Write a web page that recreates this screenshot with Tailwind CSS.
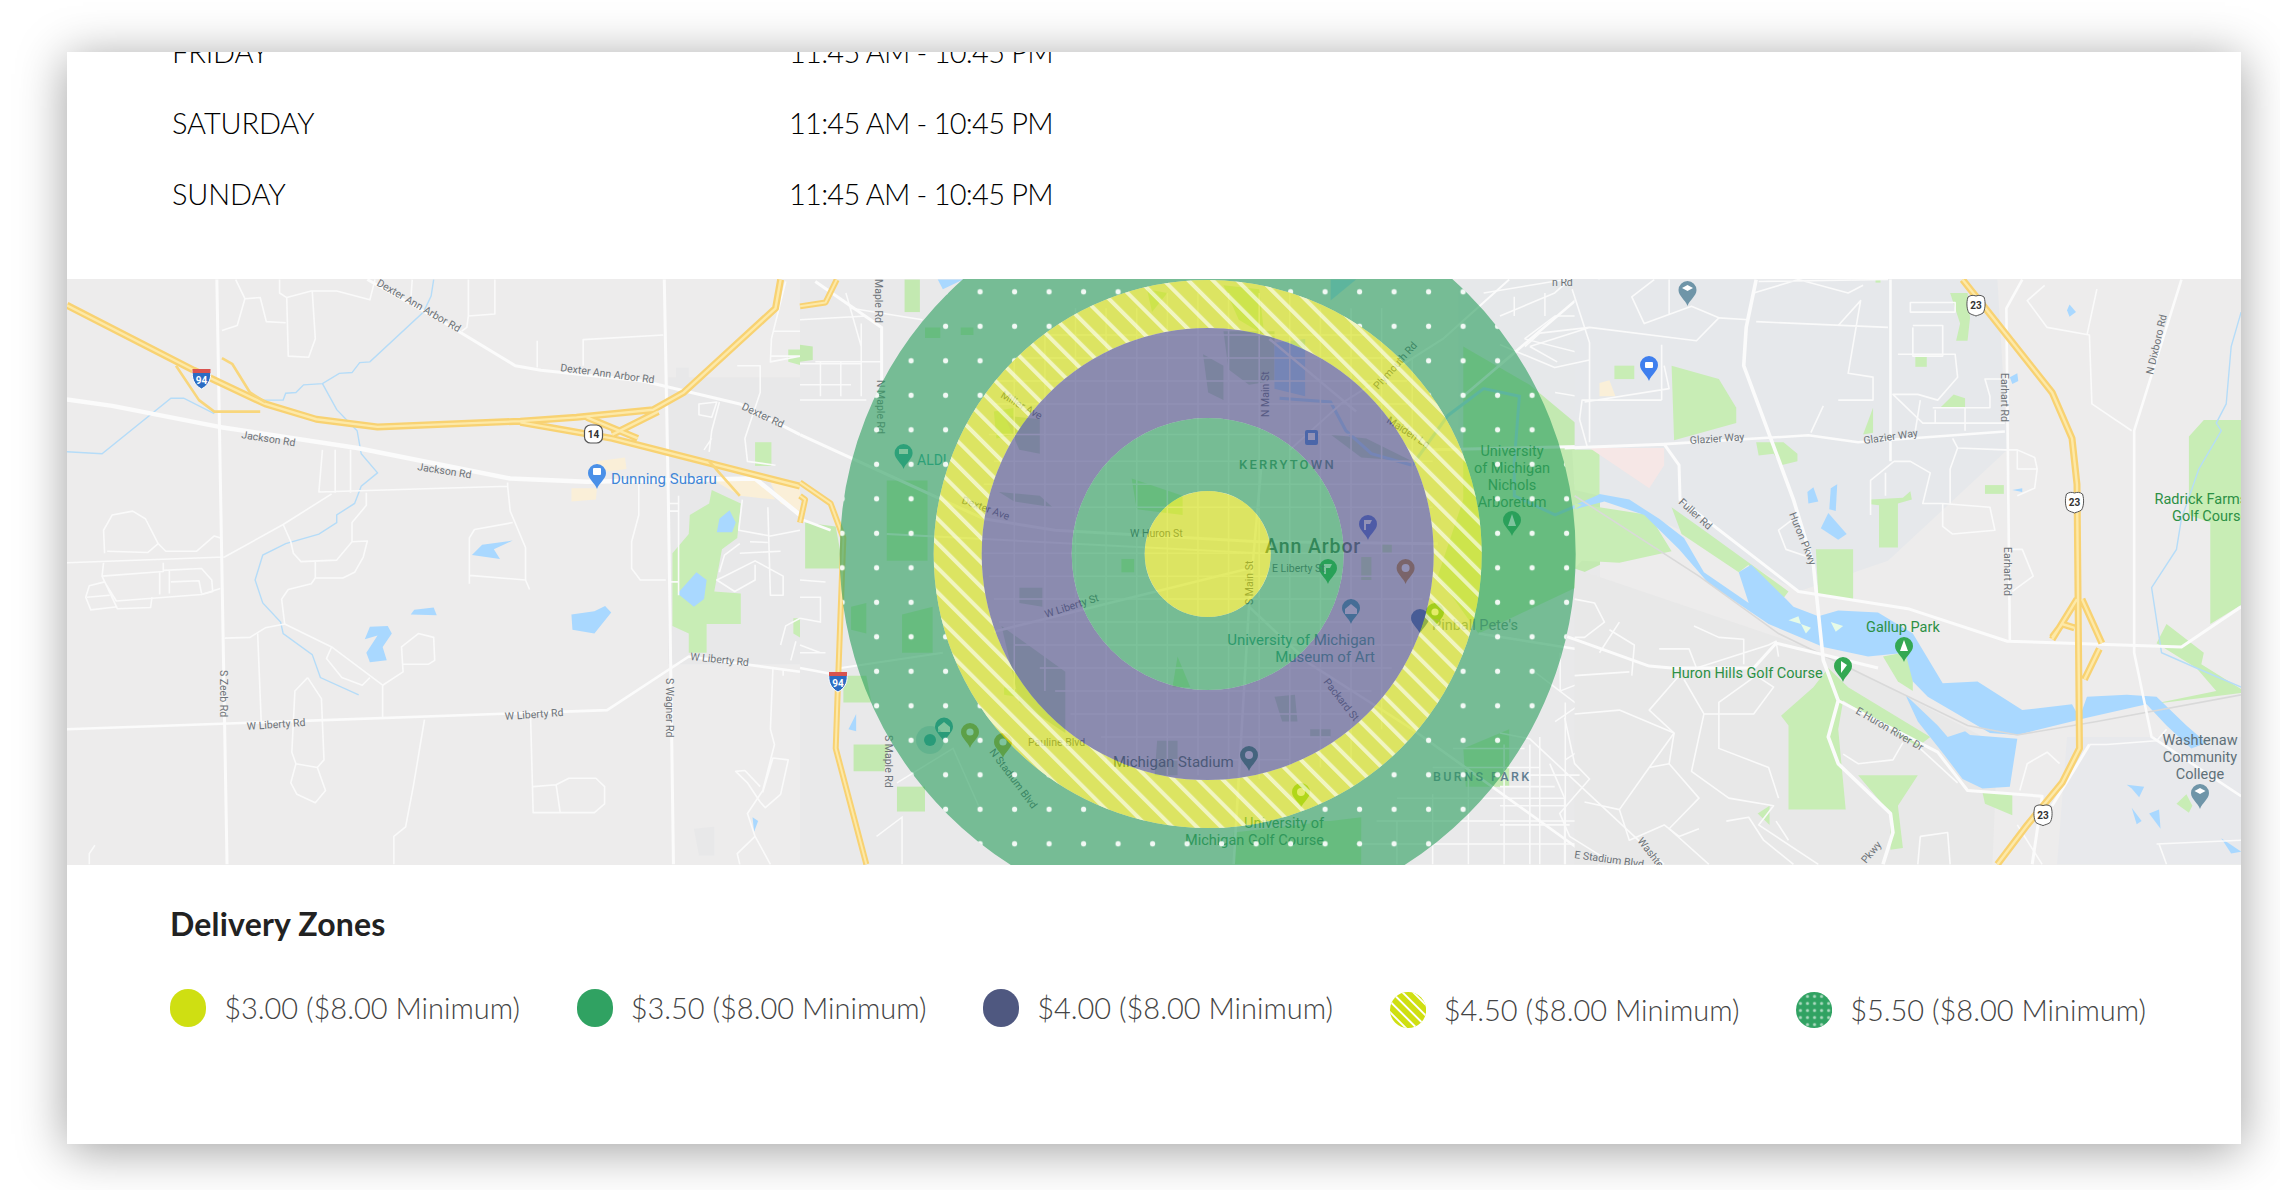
<!DOCTYPE html>
<html lang="en">
<head>
  <meta charset="UTF-8">
  <title>Delivery Zones</title>
  <script src="https://cdn.jsdelivr.net/npm/@tailwindcss/browser@4"></script>
</head>
<body class="bg-white h-[1190px] overflow-hidden font-[Lato,sans-serif]">
  <div class="ml-[67px] mt-[52px] w-[2174px] h-[1092px] bg-white shadow-[0_6px_46px_rgba(0,0,0,0.38)] absolute overflow-hidden">

    <!-- hours, scrolled so friday is cut off -->
    <div class="h-[227px] overflow-hidden text-black text-[29px] font-light pl-[105px]">
      <div class="-mt-[36px]">
        <div class="flex h-[71px] items-center"><span class="w-[617px] tracking-[-0.15px]">FRIDAY</span><span class="tracking-[-0.75px]">11:45 AM - 10:45 PM</span></div>
        <div class="flex h-[71px] items-center"><span class="w-[617px] tracking-[-0.15px]">SATURDAY</span><span class="tracking-[-0.75px]">11:45 AM - 10:45 PM</span></div>
        <div class="flex h-[71px] items-center"><span class="w-[617px] tracking-[-0.15px]">SUNDAY</span><span class="tracking-[-0.75px]">11:45 AM - 10:45 PM</span></div>
      </div>
    </div>

    <!-- map -->
    <svg class="block [&_path]:[vector-effect:non-scaling-stroke]" width="2174" height="586" viewBox="67 279 2174 586" font-family="Roboto, sans-serif">
      <defs>
        <path id="pin" d="M0 0C-2-6-9-10-9-16A9 9 0 1 1 9-16C9-10 2-6 0 0Z"/>
        <path id="shieldI" d="M-9-8H9C10-2 8 6 0 10C-8 6-10-2-9-8Z"/>
        <path id="shieldU" d="M-8-8C-5-10-3-10 0-9C3-10 5-10 8-8C10-2 9 5 7 8C4 10 2 10 0 11C-2 10-4 10-7 8C-9 5-10-2-8-8Z"/>
        <path id="hw1" d="M131 92L380 262L520 350L620 390L740 410L1020 395L1130 385L1280 365L1340 320L1520 100L1530 25M1020 398L1200 440L1568 565M1150 385L1250 440M1200 430L1290 370"/>
        <path id="hw2" d="M345 250L390 340L420 370L510 370M435 230L455 245L490 320L520 345M1390 500L1450 590"/>
        <path id="hw3" d="M72 25L50 85L0 95M0 555L60 610L85 700L75 1060L70 1250L130 1553M0 590L10 600L0 660"/>
        <path id="hw4" d="M930 25L985 115L1110 320L1150 440L1160 560L1165 1250L1130 1340L1060 1450L1000 1553M1160 860L1110 965M1170 860L1210 975M1205 990L1175 1070M1110 960L1130 925L1155 935"/>
        <pattern id="dots" x="962.85" y="274.55" width="34.5" height="34.5" patternUnits="userSpaceOnUse">
          <rect width="34.5" height="34.5" fill="#2fa060" fill-opacity=".62"/>
          <circle cx="17.25" cy="17.25" r="2.6" fill="#fff" fill-opacity=".9"/>
        </pattern>
        <pattern id="hatch" width="17.3" height="17.3" patternUnits="userSpaceOnUse" patternTransform="rotate(-45)">
          <rect width="17.3" height="17.3" fill="#d4e00e" fill-opacity=".62"/>
          <rect width="4" height="17.3" fill="#fff" fill-opacity=".6"/>
        </pattern>
      </defs>

      <rect x="67" y="279" width="2174" height="586" fill="#edecec"/>

      <!-- west side -->
      <g transform="translate(0 270) scale(.5102 .3827)">
        <g fill="#e8e8e9">
          <path d="M1310 280H1568V1030H1310Z"/>
          <path d="M1325 255H1350V300H1325Z"/>
          <path d="M1360 1460L1400 1455L1400 1530L1370 1530Z"/>
        </g>
        <g fill="#faefd8">
          <path d="M1170 500L1225 490L1228 520L1170 530Z"/>
          <path d="M1120 570H1170L1168 600L1120 605Z"/>
          <path d="M1400 550H1490L1520 600L1450 590Z"/>
          <path d="M1510 555H1568V630L1530 610Z"/>
        </g>
        <g fill="#c8edb5">
          <path d="M1318 740L1350 690L1352 640L1390 610L1395 575L1452 610L1445 700L1415 730L1400 840L1452 845V925L1385 925L1385 1000L1350 1000V950L1318 930Z"/>
          <path d="M1480 450H1512V512H1480Z"/>
          <path d="M1545 208H1568V248L1545 240Z"/>
          <path d="M1555 910H1568V960L1555 950Z"/>
        </g>
        <g fill="#a9d8ff">
          <path d="M1328 845L1365 790L1385 810L1380 860L1360 880Z"/>
          <path d="M1405 685L1410 650L1430 628L1442 660L1435 685Z"/>
          <path d="M925 745L945 718L1005 707L968 730L980 755Z"/>
          <path d="M805 900L812 888L850 882L856 902Z"/>
          <path d="M715 965L725 932L760 930L768 950L750 985L758 1020L725 1025L718 1000L740 955Z"/>
          <path d="M1120 900L1165 892L1186 878L1198 895L1165 950L1122 940Z"/>
          <path d="M1475 1430L1486 1440L1478 1468Z"/>
        </g>
        <g fill="none" stroke="#b5dcf8" stroke-width="1.4">
          <path d="M850 25L845 68L830 110L725 240L705 242L690 268L665 270L632 297L595 300L580 320L560 322L555 340L515 340"/>
          <path d="M632 297L660 365L700 420L708 480L740 530L708 565L695 610L660 640L660 660L625 690L560 715L515 745L500 810L515 870L550 920L555 950L612 1005L628 1065L703 1110"/>
          <path d="M131 475L200 480L335 335L360 335L420 375"/>
        </g>
        <g fill="none" stroke="#fafafa" stroke-width="1.6" stroke-linejoin="round">
          <path d="M548 25V60L562 72L610 55L660 55L725 78L735 25"/>
          <path d="M462 25L480 75L465 145L435 158M480 75L510 72L522 135L560 138"/>
          <path d="M562 72L565 225L605 228L618 180L612 55"/>
          <path d="M808 25L805 80M918 25V120L970 115V25M918 120L915 150L905 160M1053 185V255M1143 250V182L1300 170"/>
          <path d="M632 470L625 580L995 565L1000 630L1030 725L1030 810M657 470V582M687 470V582M995 555V565"/>
          <path d="M1005 660L930 678L920 700L920 820M920 798L1030 810L1038 835"/>
          <path d="M650 585L555 665L440 750L131 765"/>
          <path d="M555 665L570 710L575 740L590 762L660 758L690 710L720 708L712 750L695 790L672 805L618 805L618 762"/>
          <path d="M718 582V615L690 660L690 710"/>
          <path d="M618 805L610 820L565 835L552 860L558 925L520 935L490 960L440 962"/>
          <path d="M505 950L512 1180M558 925L650 985L750 1085L750 1170"/>
          <path d="M650 985L640 1015L670 1065L710 1085L725 1065"/>
          <path d="M750 1085L790 1050L787 985L820 950L850 960L852 1020L840 1030L790 1030"/>
          <path d="M832 1175L810 1350L795 1455L772 1480V1553"/>
          <path d="M603 1065L578 1100L572 1260L580 1290L622 1300L635 1280L630 1120L603 1065"/>
          <path d="M580 1290L570 1340L582 1370L618 1392L638 1360L622 1300"/>
          <path d="M1040 1170L1045 1418H1165L1185 1395V1350L1168 1328H1115L1090 1345L1098 1418M1045 1350L1090 1345"/>
          <path d="M186 1503L175 1525V1553"/>
          <path d="M205 740L203 680L220 640L260 630L285 650L310 715L290 738L210 735M310 715L325 735L385 735L420 695L432 700"/>
          <path d="M203 765L200 800L230 885L295 882L298 855M200 800L320 788V765M320 785L395 780L415 810L417 840L395 848L228 865L205 815L175 825L168 855L178 888L230 880"/>
          <path d="M313 790V848M332 785V845M335 815L390 812L395 845M170 855L215 850M395 848L432 832"/>
          <path d="M1252 560V640L1238 710V780L1255 810H1305"/>
          <path d="M1370 350L1405 345L1395 385L1370 378ZM1410 345L1395 420L1390 475M1380 470L1395 440"/>
          <path d="M1445 250H1490V320L1460 440L1465 500L1520 510M1540 30L1512 180L1510 240L1568 225M1515 160H1568M1512 225H1568"/>
          <path d="M1330 590V850M1310 610H1330M1310 630H1330M1310 815H1330"/>
          <path d="M1455 600L1448 680L1510 695L1568 680M1505 620L1510 850H1535V800L1480 760L1420 800L1405 810L1440 840L1480 810V770M1450 740L1530 735M1470 710L1505 712M1410 790L1420 745L1450 715"/>
          <path d="M1515 1040L1510 1200L1518 1240L1495 1360L1465 1420L1480 1480L1445 1525L1450 1553M1495 1365L1515 1275L1545 1280L1530 1370L1500 1405L1490 1390L1465 1340L1442 1310L1460 1308L1490 1350M1480 1480L1510 1553"/>
          <path d="M1535 1045V1060M1530 980L1540 930L1568 910M1550 1020L1560 970"/>
        </g>
        <g fill="none" stroke="#fbfbfb" stroke-linejoin="round">
          <path stroke-width="4.5" d="M131 338L220 355L430 410L700 465L1000 545L1150 553L1480 545L1568 640"/>
          <path stroke-width="3" d="M720 25L880 145L1010 250L1060 262L1260 290L1450 350L1568 430"/>
          <path stroke-width="3" d="M425 25L430 400L445 1553M1302 25L1310 600L1320 1553"/>
          <path stroke-width="2.6" d="M131 1200L1190 1150L1350 1010L1568 1050"/>
        </g>
        <g fill="none" stroke="#f8d272" stroke-width="7" stroke-linejoin="round"><use href="#hw1"/></g>
        <g fill="none" stroke="#fde9a8" stroke-width="2.4" stroke-linejoin="round"><use href="#hw1"/></g>
        <g fill="none" stroke="#f8d67c" stroke-width="2.6" stroke-linejoin="round"><use href="#hw2"/></g>
      </g>

      <!-- middle, most of it sits under the zones -->
      <g transform="translate(800 270) scale(.5102 .3827)">
        <path d="M0 25H1568V1553H0Z" fill="#e9e9ea"/>
        <path d="M1290 25H1568V470H1290Z" fill="#e6e8ea"/>
        <g fill="#c3e9b1">
          <path d="M1300 200L1430 300L1520 400V830L1330 950L1250 800L1300 600Z"/>
          <path d="M1490 480L1568 470V770L1520 800Z"/>
          <path d="M170 550H250V760H170Z"/>
          <path d="M10 660L70 670L85 780H10Z"/>
          <path d="M650 545L750 590V640L660 625Z"/>
          <path d="M830 40L900 50L910 170L860 130Z"/>
          <path d="M850 1470L1100 1430V1553H850Z"/>
          <path d="M105 1240H175L165 1310L105 1310Z"/>
          <path d="M190 1350H245V1415H190Z"/>
          <path d="M85 1060L130 1060L140 1130H85Z"/>
          <path d="M1300 1250L1390 1200V1350H1305Z"/>
          <path d="M0 195L25 200V235L0 240Z"/>
          <path d="M205 25H235V110H205Z"/>
          <path d="M630 755H655V790H630Z"/>
          <path d="M740 1010L765 1090H730Z"/>
          <path d="M1100 750H1120V810H1100Z"/>
          <path d="M1140 710H1160V740H1140Z"/>
          <path d="M245 150H275V178H245ZM315 150H340V170H315Z"/>
          <path d="M100 880L130 870L130 950L100 940Z"/>
          <path d="M200 900L260 880V1000H200Z"/>
          <path d="M400 1090L450 1100V1120L400 1110Z"/>
          <path d="M380 370L420 360V430L385 440Z"/>
          <path d="M680 50L720 60L690 110Z"/>
          <path d="M1000 1440H1040V1553H1000Z"/>
        </g>
        <g fill="#bcd6bb">
          <path d="M830 160H930V290L880 300L840 260Z"/>
          <path d="M395 930L520 1050V1210L430 1130Z"/>
          <path d="M790 220L830 250V340L800 320Z"/>
          <path d="M430 830H475V880L430 870Z"/>
          <path d="M700 1230H740V1320H695Z"/>
          <path d="M930 1115L970 1110L975 1180L945 1180Z"/>
          <path d="M1000 1200H1040V1220H1000Z"/>
          <path d="M400 380L470 390V480L430 470Z"/>
          <path d="M390 580L470 590L495 620L420 605Z"/>
          <path d="M1040 430L1110 440L1200 500L1100 490Z"/>
        </g>
        <g fill="#a9d8ff">
          <path d="M930 190L990 180V330L930 310Z"/>
          <path d="M1040 25H1090L1040 80Z"/>
          <path d="M270 25H320L280 50Z"/>
          <path d="M95 1200L110 1160V1205Z"/>
        </g>
        <path d="M940 335L1040 345L1070 420L1120 480L1200 510L1270 380L1340 310L1410 330L1400 500L1400 590L1480 640L1568 590" fill="none" stroke="#a9d8ff" stroke-width="3"/>
        <g fill="none" stroke="#fafafa" stroke-width="1.5">
          <path d="M380 500H1240M360 560H1220M350 620H1240M360 740H1240M370 800H1240M380 860H1220M390 920H1210M420 980H1200M470 1040H1160M500 1100H1120M530 1160H1080M590 1220H1040M640 1280H960"/>
          <path d="M420 230H1180M480 170H1110M380 290H1190M380 350H1190M370 430H1220"/>
          <path d="M420 230V1100M480 170V1100M540 100V1220M600 100V1290M660 100V1300M720 60V1320M780 60V1320M840 60V1330M900 60V1330M960 60V1300M1020 100V1300M1080 100V1290M1140 100V1200M1200 230V1000"/>
          <path d="M100 100L240 130M0 130L130 120M30 240H160M0 245H120M0 300H100M40 240V330M80 240V330M120 140V330M0 340H130M90 60L120 200"/>
          <path d="M0 810L50 815M0 855H40V920L0 910M0 1000H50M0 980L40 1000"/>
          <path d="M150 1480L200 1430V1553M190 1340L300 1250L350 1400"/>
          <path d="M1090 1500H1568M1130 1440H1568M1170 1380H1500M1240 1300H1450M1280 1250H1420M1170 1440V1553M1240 1370V1553M1310 1310V1553M1380 1240V1553M1450 1220V1553M1500 1130V1553"/>
          <path d="M1420 180L1480 120H1568M1340 60L1500 25M1420 180L1568 230M1480 320L1568 340M1530 350V450M1400 120V70M1460 60V120"/>
          <path d="M1490 1000V1100L1568 1060M1440 1050L1568 1180M1480 1180L1568 1100M1500 1280L1568 1220"/>
        </g>
        <g fill="none" stroke="#fbfbfb" stroke-linejoin="round">
          <path stroke-width="3" d="M30 30L160 150V300M0 430L180 540L360 650L500 680L900 710L1250 715M1240 470L1568 460"/>
          <path stroke-width="2.6" d="M380 945L880 780M880 880L1000 1030L1200 1200L1568 1553M850 1553L880 880L905 500M1330 950L1568 1000M0 650L60 680M0 1040L60 1055M920 180L1090 370M1300 330L1568 25"/>
          <path stroke-width="2" d="M1390 25L1260 180L1060 350L960 470M280 1000L80 1040M170 690L900 740"/>
        </g>
        <g fill="none" stroke="#f8d272" stroke-width="6" stroke-linejoin="round"><use href="#hw3"/></g>
        <g fill="none" stroke="#fde9a8" stroke-width="2" stroke-linejoin="round"><use href="#hw3"/></g>
      </g>

      <!-- east side -->
      <g transform="translate(1500 270) scale(.4974 .3827)">
        <path d="M150 25H1000L1020 470L780 760L600 840L400 700L150 560Z" fill="#e6e8eb"/>
        <path d="M1140 1220H1490V1553H1120Z" fill="#e8e9ec"/>
        <path d="M150 780L650 1000L1000 1240L990 1553H150Z" fill="#e8e8e8"/>
        <g fill="#c8edb5">
          <path d="M145 470H200V590L150 575Z"/>
          <path d="M150 610L300 640L345 735L240 765L165 760L150 780Z"/>
          <path d="M345 250L440 285L475 360V400L350 445Z"/>
          <path d="M230 250H270V285H230Z"/>
          <path d="M345 620L410 680L580 840L545 900L510 880L500 770L480 790L365 690Z"/>
          <path d="M515 450H570L598 480V500L565 510L550 480L520 485Z"/>
          <path d="M635 730H710V865L640 850Z"/>
          <path d="M745 600L810 595L825 578L828 600L800 610V725H762V615L745 612Z"/>
          <path d="M975 562H1013V585H975Z"/>
          <path d="M835 225H858V253H835Z"/>
          <path d="M885 360L912 325L935 335V360Z"/>
          <path d="M905 60L940 60L945 125L940 185H917L925 140Z"/>
          <path d="M755 25H765V33H755Z"/>
          <path d="M730 430L750 360V425Z"/>
          <path d="M1385 435L1415 392H1490V875L1428 925V660L1385 640Z"/>
          <path d="M660 1040L700 1090L865 1220L840 1245L690 1125L680 1200L695 1410H580V1190L565 1165L630 1090Z"/>
          <path d="M720 1320H840L800 1400L810 1510L785 1515L785 1420Z"/>
          <path d="M518 1420L542 1400V1450Z"/>
          <path d="M970 1365L1030 1370V1425L975 1395Z"/>
          <path d="M1320 975L1340 925L1415 1000L1410 1030L1490 1095V1105L1310 1135L1440 1100L1400 1040Z"/>
          <path d="M770 1010L830 995V1100L800 1075Z"/>
          <path d="M1360 1395L1380 1370L1392 1400L1385 1418Z"/>
        </g>
        <path d="M180 465L330 465V510L300 570Z" fill="#f6e7e6"/>
        <path d="M200 295L220 288L232 330H200Z" fill="#faefd8"/>
        <g fill="#a9d8ff">
          <path d="M150 625L200 585L260 600L320 650L370 700L410 790L500 870L480 790L505 770L575 860L590 880L640 905L680 890L760 895L830 950L890 1080L960 1075L1050 1150L1150 1135L1165 1170L1180 1115L1260 1110L1320 1115L1380 1190L1420 1235L1390 1250L1340 1190L1300 1135L1180 1170L1040 1215L985 1210L860 1115L830 1075L815 1000L740 1010L650 985L540 925L420 820L360 730L290 640L210 605Z"/>
          <path d="M815 1110L880 1190L900 1220L935 1205L945 1215L1040 1225L1025 1350L970 1355L930 1330L895 1270L840 1180Z"/>
          <path d="M618 580L630 568L640 605L620 610Z"/>
          <path d="M665 570L678 560L675 630L662 625Z"/>
          <path d="M645 675L660 635L697 690L680 705Z"/>
          <path d="M1145 90L1158 110L1145 122L1140 105Z"/>
          <path d="M1025 280L1040 270L1042 290L1030 298Z"/>
          <path d="M1260 1345L1295 1350L1285 1378L1270 1355Z"/>
          <path d="M1270 1405L1290 1440L1280 1448Z"/>
          <path d="M1305 1420L1325 1410L1328 1460Z"/>
          <path d="M1450 1485L1490 1520L1470 1525Z"/>
          <path d="M1030 575L1050 570V580Z"/>
        </g>
        <g fill="none" stroke="#b5dcf8" stroke-width="1.4">
          <path d="M1490 110L1470 200L1460 350L1440 400L1450 420L1405 520L1370 650L1360 730L1310 830L1330 1000L1400 1040L1490 1090"/>
        </g>
        <path d="M150 590L400 800L560 950L940 1190L1040 1215L1200 1180L1490 1110" fill="none" stroke="#d9d9d9" stroke-width="1.6"/>
        <g fill="#e6fbe7">
          <path d="M580 915L600 905L605 925Z"/><path d="M605 925L625 935L615 950Z"/><path d="M665 920L690 930L675 945Z"/>
        </g>
        <g fill="none" stroke="#fafafa" stroke-width="1.6" stroke-linejoin="round">
          <path d="M0 120L110 60L140 25M145 50L180 190L180 450M60 200L180 150L395 185L440 125L385 95L290 140L265 70L310 25M340 25V115M0 195L110 255L180 235M115 240L60 200M50 200L80 165L180 150"/>
          <path d="M510 60L600 25L700 60L730 40M515 135L780 150M440 125L500 130M680 145L725 80L700 270L750 280V340H680M520 30L780 25"/>
          <path d="M825 85H915V110H825ZM830 145H890V225H830V150M800 220H915L920 280L880 340L840 325L790 325L850 400H1015M870 360H985V330L975 285H1010"/>
          <path d="M935 360V420M845 340L835 420M875 400V365M650 355L625 425"/>
          <path d="M325 340H165L160 390L175 460M325 195V340M170 345L340 310L330 250"/>
          <path d="M1095 40L1060 80L1100 150L1185 170L1190 350L1270 420M1200 50L1180 170"/>
          <path d="M792 500L745 550L745 640M775 530V590M792 500H825L865 530L850 610H890L985 620L995 680L910 690L890 670V610M910 440L920 465L1015 470H1040V520L1080 520L1075 490L1040 470M1080 520L1075 570L1040 590"/>
          <path d="M920 465L905 520V610M1025 730H1050L1072 800L1030 840"/>
          <path d="M595 645L560 680L575 730L620 750"/>
          <path d="M150 860L190 870L210 920L170 960L150 960M220 940L270 980L265 1060M240 920L200 1000M150 1060L260 1050M150 1160L240 1150L350 1210"/>
          <path d="M345 1040L360 1060L300 1150L350 1210L340 1290L400 1380L340 1460L420 1553"/>
          <path d="M370 1070L410 1160L385 1310L460 1380L550 1400L520 1450L640 1553M410 1160L510 1160L550 1090L515 1060L440 1130L440 1250L540 1300L560 1380"/>
          <path d="M320 990L380 990L395 1040L540 980L555 970L560 1010M390 930L440 960L490 965L490 1030"/>
          <path d="M0 1210L60 1225L270 1480L330 1553M130 1170L150 1290L180 1330L120 1420L140 1480L230 1553M50 1320L160 1320M0 1350H110M60 1240V1553M100 1290L130 1380V1553M0 1450H140M0 1400H130"/>
          <path d="M170 1390L240 1410L300 1300L340 1290M240 1410L260 1490L330 1450L360 1480L400 1460M300 1300L350 1210M455 1440L500 1430L530 1490L590 1553M555 1440L580 1490"/>
          <path d="M690 1265L720 1290L790 1280L810 1235M840 1245L920 1340M1045 1360L1060 1290L1100 1260L1125 1290M1040 1450L1090 1553M845 1480L900 1470L905 1553M845 1480L840 1553"/>
          <path d="M1185 1240L1220 1240L1320 1230L1340 1200M1325 1500L1340 1553M1320 1500L1490 1490"/>
        </g>
        <g fill="none" stroke="#fbfbfb" stroke-linejoin="round">
          <path stroke-width="3.6" d="M515 25L495 150L490 250L590 600L630 770L650 1020L680 1125L660 1220L680 1290L785 1420L790 1470L770 1553"/>
          <path stroke-width="3" d="M130 465L330 455L360 510L362 600L600 840L820 885L1020 970L1370 985L1490 880"/>
          <path stroke-width="2.6" d="M330 455L620 432L720 450L1015 422M1050 25L1018 100L1025 970M1370 25L1275 420L1275 1000L1310 1220L1490 1375M785 25V500"/>
          <path stroke-width="3" d="M135 958L300 1035L345 1040L510 1040L555 975L760 1040M680 1125L880 1260L940 1360L1090 1375L1070 1553M1185 1240L1110 1400"/>
        </g>
        <g fill="none" stroke="#f8d272" stroke-width="7" stroke-linejoin="round"><use href="#hw4"/></g>
        <g fill="none" stroke="#fde9a8" stroke-width="2.4" stroke-linejoin="round"><use href="#hw4"/></g>
      </g>

      <!-- pins, tinted by the zones above them -->
      <use href="#pin" x="597" y="489" fill="#4a90e8"/><rect x="593" y="468" width="8" height="7" rx="1" fill="#fff"/>
      <use href="#pin" x="1649" y="381" fill="#3f7fee"/><rect x="1645" y="362" width="8" height="6" rx="1" fill="#fff"/>
      <use href="#pin" x="1687.5" y="306" fill="#6f95a8"/><path d="M1682 288L1687.5 285L1693 288L1687.5 291Z" fill="#fff"/>
      <use href="#pin" x="2200" y="809" fill="#6f95a8"/><path d="M2194.5 791L2200 788L2205.5 791L2200 794Z" fill="#fff"/>
      <use href="#pin" x="1904" y="662" fill="#34a853"/><path d="M1904 640L1908 651H1900Z" fill="#fff"/>
      <use href="#pin" x="1843" y="682" fill="#34a853"/><path d="M1841 661V673L1847 665Z" fill="#fff"/>
      <use href="#pin" x="903.6" y="469" fill="#2aa4a0"/><rect x="899" y="449" width="9" height="5" fill="#fff"/>
      <use href="#pin" x="1368" y="540" fill="#3a5fd0"/><path d="M1364 520H1372L1370 524H1366V530H1364Z" fill="#fff"/>
      <use href="#pin" x="1405.6" y="584" fill="#b97a20"/><circle cx="1405.6" cy="568" r="4" fill="#fff"/>
      <use href="#pin" x="1328" y="584" fill="#1fa24a"/><path d="M1324 564H1332L1330 568H1326V574H1324Z" fill="#fff"/>
      <use href="#pin" x="1351" y="624" fill="#1f93a0"/><path d="M1345 609L1351 604L1357 609V614H1345Z" fill="#fff"/>
      <use href="#pin" x="1249" y="771" fill="#1f7a5c"/><circle cx="1249" cy="755" r="4" fill="#fff"/>
      <use href="#pin" x="944" y="742.6" fill="#1f93a0"/><path d="M938 727L944 722L950 727V732H938Z" fill="#fff"/>
      <use href="#pin" x="970" y="748" fill="#a8a020"/><circle cx="970" cy="732" r="3.6" fill="#fff"/>
      <use href="#pin" x="1003" y="758" fill="#a8a020"/><circle cx="1003" cy="742" r="3.6" fill="#fff"/>
      <use href="#pin" x="1512" y="536" fill="#22a050"/><path d="M1512 514L1516 526H1508Z" fill="#fff"/>
      <use href="#pin" x="1301" y="808" fill="#7ac82a"/><circle cx="1301" cy="792" r="4" fill="#fff"/>
      <use href="#pin" x="1420" y="634" fill="#2560a0"/>
      <use href="#pin" x="1435" y="628" fill="#54b030"/><circle cx="1435" cy="612" r="3.6" fill="#fff"/>
      <circle cx="930" cy="740" r="14" fill="#1f93a0" opacity=".25"/><circle cx="930" cy="740" r="6" fill="#1f93a0"/>
      <rect x="1305" y="430" width="13" height="15" rx="2" fill="#2f7fd8"/><rect x="1308" y="433" width="7" height="7" fill="#fff"/>

      <!-- labels -->
      <g font-size="10.5" fill="#6d7378">
        <text transform="translate(376 285) rotate(30)">Dexter Ann Arbor Rd</text>
        <text transform="translate(560 371) rotate(7.5)">Dexter Ann Arbor Rd</text>
        <text transform="translate(741 409) rotate(25)">Dexter Rd</text>
        <text transform="translate(241 438) rotate(9)">Jackson Rd</text>
        <text transform="translate(417 470) rotate(9)">Jackson Rd</text>
        <text transform="translate(220 670) rotate(90)">S Zeeb Rd</text>
        <text transform="translate(666 678) rotate(90)">S Wagner Rd</text>
        <text transform="translate(247 730) rotate(-4)">W Liberty Rd</text>
        <text transform="translate(505 720) rotate(-4)">W Liberty Rd</text>
        <text transform="translate(690 660) rotate(6)">W Liberty Rd</text>
        <text transform="translate(875 279) rotate(90)">Maple Rd</text>
        <text transform="translate(877 380) rotate(90)">N Maple Rd</text>
        <text transform="translate(885 735) rotate(90)">S Maple Rd</text>
        <text transform="translate(1574 858) rotate(8)">E Stadium Blvd</text>
        <text transform="translate(1637 841) rotate(52)">Washtenaw</text>
        <text transform="translate(1690 444) rotate(-4)">Glazier Way</text>
        <text transform="translate(1864 444) rotate(-8)">Glazier Way</text>
        <text transform="translate(1678 503) rotate(42)">Fuller Rd</text>
        <text transform="translate(1789 514) rotate(68)">Huron Pkwy</text>
        <text transform="translate(2001 373) rotate(90)">Earhart Rd</text>
        <text transform="translate(2004 547) rotate(90)">Earhart Rd</text>
        <text transform="translate(2153 375) rotate(-77)">N Dixboro Rd</text>
        <text transform="translate(1855 713) rotate(30)">E Huron River Dr</text>
        <text transform="translate(1866 864) rotate(-50)">Pkwy</text>
        <text x="1552" y="286">n Rd</text>
      </g>
      <text x="611" y="484" font-size="15" fill="#3f86d8">Dunning Subaru</text>
      <text x="917" y="465" font-size="14" fill="#2aa09c">ALDI</text>
      <g font-size="14.5" fill="#2c9045" text-anchor="middle">
        <text x="1512" y="456">University</text>
        <text x="1512" y="473">of Michigan</text>
        <text x="1512" y="490">Nichols</text>
        <text x="1512" y="507">Arboretum</text>
      </g>
      <text x="1239" y="469" font-size="13" letter-spacing="2.2" fill="#3f7f6c" font-weight="500">KERRYTOWN</text>
      <text x="1265" y="553" font-size="19.5" letter-spacing=".9" fill="#3b5f50" font-weight="500">Ann Arbor</text>
      <g font-size="10.5" fill="#4f5a68">
        <text x="1130" y="537">W Huron St</text>
        <text x="1272" y="572">E Liberty St</text>
        <text transform="translate(1046 618) rotate(-18)">W Liberty St</text>
        <text transform="translate(1253 605) rotate(-90)">S Main St</text>
        <text transform="translate(1269 417) rotate(-90)">N Main St</text>
        <text transform="translate(1000 397) rotate(30)">Miller Ave</text>
        <text transform="translate(961 503) rotate(20)">Dexter Ave</text>
        <text transform="translate(1378 390) rotate(-48)">Plymouth Rd</text>
        <text transform="translate(1386 422) rotate(33)">Maiden Ln</text>
        <text transform="translate(1323 682) rotate(52)">Packard St</text>
        <text x="1028" y="746">Pauline Blvd</text>
        <text transform="translate(989 752) rotate(53)">N Stadium Blvd</text>
      </g>
      <text x="1432" y="630" font-size="14.5" fill="#6a8a80">Pinball Pete's</text>
      <g font-size="15" fill="#2a8f80" text-anchor="end">
        <text x="1375" y="645">University of Michigan</text>
        <text x="1375" y="662">Museum of Art</text>
      </g>
      <text x="1113" y="767" font-size="15" fill="#2f5a4a">Michigan Stadium</text>
      <g font-size="14.5" fill="#2f8a4f" text-anchor="end">
        <text x="1324" y="828">University of</text>
        <text x="1324" y="845">Michigan Golf Course</text>
      </g>
      <text x="1433" y="781" font-size="12.5" letter-spacing="2.4" fill="#5f7d90" font-weight="500">BURNS PARK</text>
      <g font-size="14.5" fill="#2c9045">
        <text x="2154.5" y="504">Radrick Farms</text>
        <text x="2172" y="521">Golf Course</text>
        <text x="1866" y="632">Gallup Park</text>
        <text x="1671.5" y="677.5">Huron Hills Golf Course</text>
      </g>
      <g font-size="14.5" fill="#5f7078" text-anchor="middle">
        <text x="2200" y="745">Washtenaw</text>
        <text x="2200" y="762">Community</text>
        <text x="2200" y="779">College</text>
      </g>

      <!-- road shields -->
      <g font-size="10" font-weight="700" text-anchor="middle">
        <g transform="translate(201.5 379)">
          <use href="#shieldI" fill="#2b6cc4" stroke="#fff"/><rect x="-9" y="-10" width="18" height="4" fill="#d9534f"/>
          <text y="4.5" fill="#fff">94</text>
        </g>
        <g transform="translate(838 682)">
          <use href="#shieldI" fill="#2b6cc4" stroke="#fff"/><rect x="-9" y="-10" width="18" height="4" fill="#d9534f"/>
          <text y="4.5" fill="#fff">94</text>
        </g>
        <g transform="translate(593.5 434)">
          <rect x="-9" y="-9" width="18" height="18" rx="6" fill="#fff" stroke="#555" stroke-width="1.2"/>
          <text y="3.5" fill="#333">14</text>
        </g>
        <g transform="translate(1976 305)">
          <use href="#shieldU" fill="#fff" stroke="#555"/><text y="4" fill="#333">23</text>
        </g>
        <g transform="translate(2074.5 502)">
          <use href="#shieldU" fill="#fff" stroke="#555"/><text y="4" fill="#333">23</text>
        </g>
        <g transform="translate(2043 814.6)">
          <use href="#shieldU" fill="#fff" stroke="#555"/><text y="4" fill="#333">23</text>
        </g>
      </g>

      <!-- delivery zones -->
      <g fill="none">
        <circle cx="1207.7" cy="554" r="321" stroke="url(#dots)" stroke-width="94"/>
        <circle cx="1207.7" cy="554" r="250" stroke="url(#hatch)" stroke-width="48"/>
        <circle cx="1207.7" cy="554" r="181" stroke="#5a5a90" stroke-opacity=".66" stroke-width="90"/>
        <circle cx="1207.7" cy="554" r="99.5" stroke="#2fa060" stroke-opacity=".62" stroke-width="73"/>
        <circle cx="1207.7" cy="554" r="63" fill="#d4e00e" fill-opacity=".62"/>
      </g>
    </svg>

    <!-- legend -->
    <div class="pl-[103px]">
      <h2 class="pt-[40px] text-[#222] text-[32px] leading-[38px] font-bold tracking-[0.2px]">Delivery Zones</h2>
      <div class="flex gap-[56.5px] mt-[44px] text-[#444] text-[29px] font-light leading-[38px] whitespace-nowrap">
        <div class="flex items-center gap-[18px] w-[350px]">
          <span class="w-[38px] h-[38px] rounded-full bg-[#cfdf12]"></span>
          <span>$3.00 ($8.00 Minimum)</span>
        </div>
        <div class="flex items-center gap-[18px] w-[350px]">
          <span class="w-[38px] h-[38px] rounded-full bg-[#30a262]"></span>
          <span>$3.50 ($8.00 Minimum)</span>
        </div>
        <div class="flex items-center gap-[18px] w-[350px]">
          <span class="w-[38px] h-[38px] rounded-full bg-[#4f5880]"></span>
          <span>$4.00 ($8.00 Minimum)</span>
        </div>
        <div class="flex items-center gap-[18px] w-[350px] mt-[4px]">
          <svg width="38" height="38" viewBox="0 0 38 38">
            <defs>
              <pattern id="legHatch" width="8" height="8" patternUnits="userSpaceOnUse" patternTransform="rotate(-45)">
                <rect width="2" height="8" fill="#fff"/>
              </pattern>
            </defs>
            <circle cx="19" cy="19" r="19" fill="#cfdf12"/>
            <circle cx="19" cy="19" r="19" fill="url(#legHatch)"/>
          </svg>
          <span>$4.50 ($8.00 Minimum)</span>
        </div>
        <div class="flex items-center gap-[18px] w-[350px] mt-[4px]">
          <svg width="38" height="38" viewBox="0 0 38 38">
            <defs>
              <pattern id="legDots" x="1" y="1" width="7.4" height="7.4" patternUnits="userSpaceOnUse">
                <circle cx="3.7" cy="3.7" r="1.7" fill="#fff" fill-opacity=".6"/>
              </pattern>
            </defs>
            <circle cx="19" cy="19" r="19" fill="#30a262"/>
            <circle cx="19" cy="19" r="19" fill="url(#legDots)"/>
          </svg>
          <span>$5.50 ($8.00 Minimum)</span>
        </div>
      </div>
    </div>
  </div>
</body>
</html>
